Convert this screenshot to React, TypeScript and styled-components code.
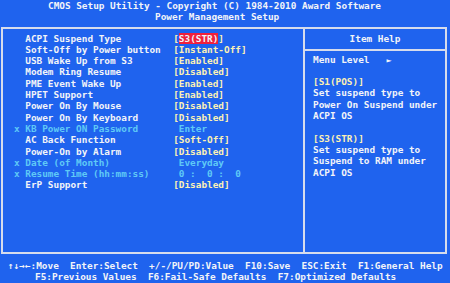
import styled, { createGlobalStyle } from 'styled-components';

const BLUE = '#1f63ee';
const LINE = '#d6dcec';
const WHITE = '#f2f4f8';
const YELLOW = '#fbf1b4';
const CYAN = '#5fcaf6';
const RED = '#f0203c';

type Item = {
  label: string;
  value: string;
  locked?: boolean;
  selected?: boolean;
};

const ITEMS: Item[] = [
  { label: 'ACPI Suspend Type', value: 'S3(STR)', selected: true },
  { label: 'Soft-Off by Power button', value: 'Instant-Off' },
  { label: 'USB Wake Up from S3', value: 'Enabled' },
  { label: 'Modem Ring Resume', value: 'Disabled' },
  { label: 'PME Event Wake Up', value: 'Enabled' },
  { label: 'HPET Support', value: 'Enabled' },
  { label: 'Power On By Mouse', value: 'Disabled' },
  { label: 'Power On By Keyboard', value: 'Disabled' },
  { label: 'KB Power ON Password', value: ' Enter', locked: true },
  { label: 'AC Back Function', value: 'Soft-Off' },
  { label: 'Power-On by Alarm', value: 'Disabled' },
  { label: 'Date (of Month)', value: ' Everyday', locked: true },
  { label: 'Resume Time (hh:mm:ss)', value: ' 0 :  0 :  0', locked: true },
  { label: 'ErP Support', value: 'Disabled' },
];

const GlobalStyle = createGlobalStyle`
  html, body {
    margin: 0;
    padding: 0;
    background: ${BLUE};
  }
  body {
    font-family: "DejaVu Sans Mono", "Liberation Mono", monospace;
    font-weight: bold;
    font-size: 9.4px;
    line-height: 11.3px;
    color: ${WHITE};
    white-space: pre;
  }
`;

const Screen = styled.div`
  width: 450px;
  height: 283px;
  overflow: hidden;
  display: flex;
  flex-direction: column;
  background: ${BLUE};
`;

const Header = styled.div`
  display: flex;
  flex-direction: column;
`;

const Line = styled.div<{ $left: number; $color?: string }>`
  padding-left: ${(p) => p.$left}px;
  height: 11.3px;
  color: ${(p) => p.$color ?? WHITE};
`;

const Frame = styled.div`
  margin: 4px 0 0 1px;
  width: 446px;
  height: 227px;
  box-sizing: border-box;
  border: 2px solid ${LINE};
  display: grid;
  grid-template-columns: 302px 1fr;
`;

const Settings = styled.div`
  border-right: 2px solid ${LINE};
  padding: 4px 0 0 11px;
  display: flex;
  flex-direction: column;
`;

const Row = styled.div`
  display: grid;
  grid-template-columns: 11.3px 147.9px 1fr;
  height: 11.3px;
`;

const Mark = styled.span`
  color: ${CYAN};
`;

const Label = styled.span<{ $locked?: boolean }>`
  color: ${(p) => (p.$locked ? CYAN : WHITE)};
`;

const Value = styled.span<{ $locked?: boolean }>`
  color: ${(p) => (p.$locked ? CYAN : YELLOW)};
`;

const Chosen = styled.span`
  background: ${RED};
  color: ${WHITE};
`;

const Help = styled.div`
  display: flex;
  flex-direction: column;
`;

const HelpTitle = styled.div`
  height: 20px;
  line-height: 20px;
  text-align: center;
  border-bottom: 2px solid ${LINE};
`;

const HelpBody = styled.div`
  padding: 3px 0 0 8px;
  display: flex;
  flex-direction: column;
`;

const HelpLine = styled.div<{ $accent?: boolean }>`
  height: 11.3px;
  color: ${(p) => (p.$accent ? YELLOW : WHITE)};
`;

const Arrow = styled.span`
  font-size: 8.5px;
`;

const Footer = styled.div`
  margin-top: 6px;
  display: flex;
  flex-direction: column;
`;

const HELP_LINES: { text: string; accent?: boolean }[] = [
  { text: '' },
  { text: '[S1(POS)]', accent: true },
  { text: 'Set suspend type to' },
  { text: 'Power On Suspend under' },
  { text: 'ACPI OS' },
  { text: '' },
  { text: '[S3(STR)]', accent: true },
  { text: 'Set suspend type to' },
  { text: 'Suspend to RAM under' },
  { text: 'ACPI OS' },
];

const App = () => (
  <Screen>
    <GlobalStyle />
    <Header>
      <Line $left={48}>CMOS Setup Utility - Copyright (C) 1984-2010 Award Software</Line>
      <Line $left={155}>Power Management Setup</Line>
    </Header>
    <Frame>
      <Settings>
        {ITEMS.map((item) => (
          <Row key={item.label}>
            <Mark>{item.locked ? 'x' : ''}</Mark>
            <Label $locked={item.locked}>{item.label}</Label>
            <Value $locked={item.locked}>
              {item.locked ? (
                item.value
              ) : item.selected ? (
                <>
                  [<Chosen>{item.value}</Chosen>]
                </>
              ) : (
                `[${item.value}]`
              )}
            </Value>
          </Row>
        ))}
      </Settings>
      <Help>
        <HelpTitle>Item Help</HelpTitle>
        <HelpBody>
          <HelpLine>
            Menu Level   <Arrow>►</Arrow>
          </HelpLine>
          {HELP_LINES.map((l, i) => (
            <HelpLine key={i} $accent={l.accent}>
              {l.text}
            </HelpLine>
          ))}
        </HelpBody>
      </Help>
    </Frame>
    <Footer>
      <Line $left={8}>↑↓→←:Move  Enter:Select  +/-/PU/PD:Value  F10:Save  ESC:Exit  F1:General Help</Line>
      <Line $left={35}>F5:Previous Values  F6:Fail-Safe Defaults  F7:Optimized Defaults</Line>
    </Footer>
  </Screen>
);

export default App;
